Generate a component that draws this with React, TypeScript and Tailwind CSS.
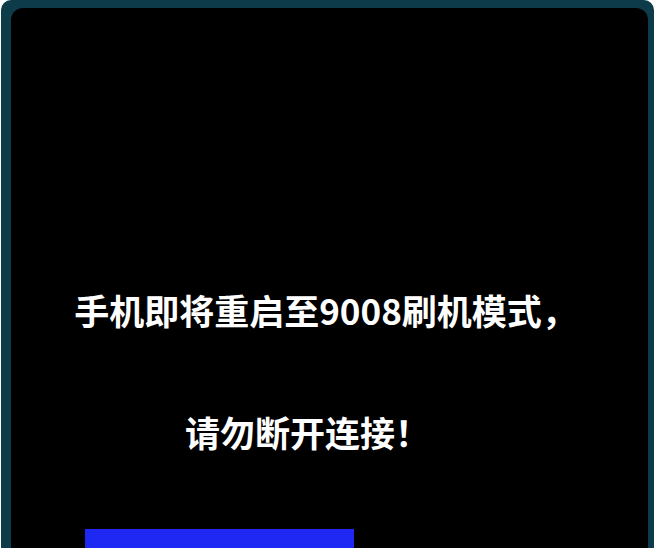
import React from 'react';

const App: React.FC = () => {
  return (
    <div className="w-full h-[548px] bg-white overflow-hidden">
      {/* teal device frame */}
      <div className="h-full mx-px rounded-t-[10px] bg-[#0e3b4a] pt-[8px] pl-[10px] pr-[6px]">
        <div
          className="h-full rounded-t-[12px] bg-black flex flex-col text-white font-bold"
          style={{ fontFamily: '"Noto Sans CJK SC", "Noto Sans", sans-serif' }}
        >
          <p className="mt-[282px] h-[40px] leading-[40px] text-[35px] text-center pr-[8px] whitespace-nowrap">
            手机即将重启至9008刷机模式，
          </p>
          <p className="mt-[82px] h-[40px] leading-[40px] text-[35px] text-center pr-[44px] whitespace-nowrap">
            请勿断开连接！
          </p>
          {/* progress bar */}
          <div className="mt-[77px] ml-[74px] w-[269px] flex-1 bg-[#1f28f2] shadow-[0_-6px_10px_rgba(0,0,0,0.8)]" />
        </div>
      </div>
    </div>
  );
};

export default App;
